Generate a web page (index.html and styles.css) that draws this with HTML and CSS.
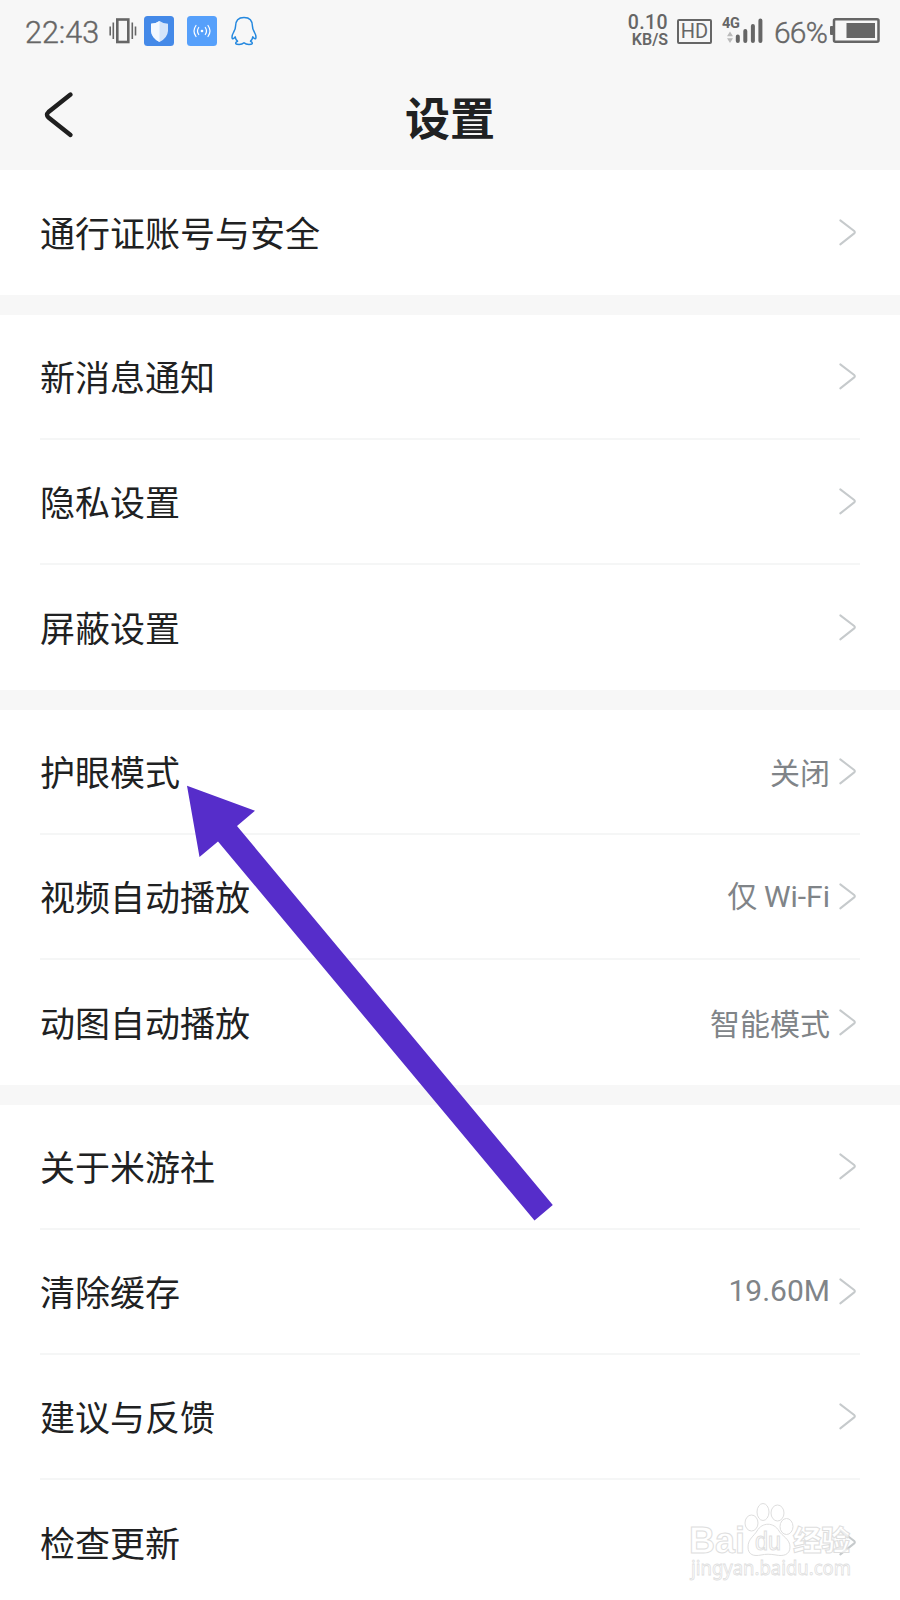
FILE: index.html
```html
<!DOCTYPE html>
<html lang="zh-CN">
<head>
<meta charset="utf-8">
<title>设置</title>
<link rel="stylesheet" href="styles.css">
</head>
<body>
<svg class="defs" width="0" height="0">
  <symbol id="chev" viewBox="0 0 20 30"><path d="M2.300 3.400 L16.200 14 Q17.500 15.200 16.200 16.400 L2.300 27.400" fill="none" stroke="#c6cacc" stroke-width="2" stroke-linecap="round"/></symbol>
</svg>
<div class="screen">
  <header class="top">
    <div class="status">
      <div class="left">
        <span class="time">22:43</span>
        <svg class="vibrate" width="28" height="26" viewBox="0 0 28 26" fill="none" stroke="#666"><rect x="8.300" y="1.500" width="11" height="22.500" stroke-width="2.600"/><path d="M4.300 4.500V21M23.300 4.500V21M1.200 8.500V17.500M26.500 8.500V17.500" stroke-width="1.600"/></svg>
        <svg class="shield" width="30" height="30" viewBox="0 0 30 30"><rect width="30" height="30" rx="3.500" fill="#4489e8"/><path d="M15.500 5 Q19 7.500 24 7.700 V15 Q23.500 22 15.500 26 Q7.500 22 7 15 V7.700 Q12 7.500 15.500 5Z" fill="#d4e4fa"/><path d="M15.500 5 Q12 7.500 7 7.700 V15 Q7.500 22 15.500 26Z" fill="#f4f8ff"/></svg>
        <svg class="cast" width="30" height="30" viewBox="0 0 30 30" fill="none" stroke="#fff" stroke-width="1.200" stroke-linecap="round"><rect width="30" height="30" rx="3.500" fill="#56a0fb" stroke="none"/><circle cx="15" cy="15" r="1.300" fill="#fff" stroke="none"/><path d="M11.700 11.500Q9.300 15 11.700 18.500M18.300 11.500Q20.700 15 18.300 18.500M9 9.500Q5 15 9 20.500M21 9.500Q25 15 21 20.500"/></svg>
        <svg class="penguin" width="26" height="30" viewBox="0 0 26 30" fill="none" stroke="#2488df" stroke-width="1.500" stroke-linejoin="round"><path d="M13 1.500C7 1.500 4.500 5.500 4.500 10.500C4.500 12.500 4 14 2.700 16C1 19 .7 21 1.300 22.500C2 23.500 3.500 22 4.200 20.800C4.500 22.500 5 24 6.500 25.200C4.500 26 4 28 6 28.300C9 28.700 11.500 28.200 13 26.800C14.500 28.200 17 28.700 20 28.300C22 28 21.500 26 19.500 25.200C21 24 21.500 22.500 21.800 20.800C22.500 22 24 23.500 24.700 22.500C25.300 21 25 19 23.300 16C22 14 21.500 12.500 21.500 10.500C21.500 5.500 19 1.500 13 1.500Z"/></svg>
      </div>
      <div class="right">
        <div class="speed"><span class="rate">0.10</span><span>KB/S</span></div>
        <span class="hd">HD</span>
        <div class="net">
          <span class="gen">4G</span>
          <svg width="41" height="26" viewBox="0 0 41 26"><path d="M8 13.500l3 4.700H5zM8 25l3-4.700H5z" fill="#bbb"/><path d="M15.800 18.500V23M23.300 13V23M30.900 8V23M38.400 2.500V23" stroke="#666" stroke-width="4" stroke-linecap="round"/></svg>
        </div>
        <span class="pct">66%</span>
        <svg class="battery" width="50" height="26" viewBox="0 0 50 26"><rect x="4" y="1.300" width="44.500" height="22.500" rx="1.500" fill="none" stroke="#666" stroke-width="2.500"/><rect y="8" width="3.500" height="9" rx="1" fill="#666"/><rect x="16.500" y="5" width="28.500" height="15" fill="#666"/></svg>
      </div>
    </div>
    <div class="nav">
      <svg class="back" width="32" height="50" viewBox="0 0 32 50"><path d="M26.500 4.500L4.500 22Q1.500 24.800 4.500 27.500L26.500 45" fill="none" stroke="#1f1f1f" stroke-width="4.400" stroke-linecap="round"/></svg>
      <h1>设置</h1>
    </div>
  </header>
  <section class="group">
    <div class="row"><span class="label">通行证账号与安全</span><svg class="chev"><use href="#chev"/></svg></div>
  </section>
  <section class="group">
    <div class="row"><span class="label">新消息通知</span><svg class="chev"><use href="#chev"/></svg></div>
    <div class="row"><span class="label">隐私设置</span><svg class="chev"><use href="#chev"/></svg></div>
    <div class="row"><span class="label">屏蔽设置</span><svg class="chev"><use href="#chev"/></svg></div>
  </section>
  <section class="group">
    <div class="row"><span class="label">护眼模式</span><span class="value">关闭</span><svg class="chev"><use href="#chev"/></svg></div>
    <div class="row"><span class="label">视频自动播放</span><span class="value">仅 <span class="latin">Wi-Fi</span></span><svg class="chev"><use href="#chev"/></svg></div>
    <div class="row"><span class="label">动图自动播放</span><span class="value">智能模式</span><svg class="chev"><use href="#chev"/></svg></div>
  </section>
  <section class="group">
    <div class="row"><span class="label">关于米游社</span><svg class="chev"><use href="#chev"/></svg></div>
    <div class="row"><span class="label">清除缓存</span><span class="value latin">19.60M</span><svg class="chev"><use href="#chev"/></svg></div>
    <div class="row"><span class="label">建议与反馈</span><svg class="chev"><use href="#chev"/></svg></div>
    <div class="row"><span class="label">检查更新</span><svg class="chev"><use href="#chev"/></svg></div>
  </section>
  <svg class="arrow" width="370" height="436" viewBox="186 785 370 436"><path d="M187 785.700L255 810.700L237 826L552.800 1205L534.500 1220.500L218 841.500L199.500 857Z" fill="#562dca"/></svg>
  <svg class="watermark" width="180" height="90" viewBox="0 0 180 90">
    <g fill="#fff" stroke="#dedede" stroke-width="1">
      <text class="wm-brand" x="1" y="53" textLength="56" lengthAdjust="spacingAndGlyphs">Bai</text>
      <ellipse cx="63.500" cy="23" rx="6.500" ry="8"/><ellipse cx="75" cy="12" rx="6" ry="8.500"/><ellipse cx="89.500" cy="13" rx="6.500" ry="8"/><ellipse cx="98.500" cy="26.500" rx="6.500" ry="8"/>
      <path d="M69 31C74 22 86 22 91 31C94 36 102 39 102 47C102 55 95 56.500 88 55C82 54 78 54 73 55C66 56.500 60 55 60 47C60 39 66 36 69 31Z"/>
      <text class="wm-du" x="67" y="49.500" textLength="26" lengthAdjust="spacingAndGlyphs">du</text>
      <text class="wm-cn" x="105" y="51" textLength="57" lengthAdjust="spacingAndGlyphs" fill-opacity=".7">经验</text>
      <text class="wm-url" x="3" y="75" textLength="160" lengthAdjust="spacingAndGlyphs">jingyan.baidu.com</text>
    </g>
  </svg>
</div>
</body>
</html>
```
FILE: styles.css
```css
* { box-sizing: border-box; }
body { margin: 0; background: #f7f7f7; font-family: "Noto Sans CJK SC", sans-serif; color: #202122; }
.defs { position: absolute; }
.screen { position: relative; width: 900px; height: 1600px; overflow: hidden; }
.top { height: 170px; background: #f7f7f7; }
.status { height: 62px; display: flex; justify-content: space-between; align-items: center; padding: 0 20px 0 25px; font-family: Roboto, sans-serif; color: #666; }
.left, .right { display: flex; align-items: center; }
.time { width: 84px; font-size: 30.5px; line-height: 36px; padding-top: 4px; font-weight: 300; -webkit-text-stroke: 0.4px #666; }
.vibrate { margin-right: 7px; }
.shield { margin-right: 13px; }
.cast { margin-right: 14px; }
.speed { display: flex; flex-direction: column; align-items: flex-end; font-size: 16px; line-height: 16px; font-weight: 600; width: 44px; margin: 0 9px 0 0; }
.rate { font-size: 19.5px; line-height: 18px; letter-spacing: 0.4px; font-weight: 500; }
.hd { width: 35px; height: 25px; border: 2.5px solid #666; border-radius: 2px; font-size: 20px; line-height: 21px; text-align: center; margin-right: 10px; }
.net { position: relative; width: 41px; height: 26px; margin-right: 11px; }
.net svg { display: block; }
.gen { position: absolute; left: 0; top: -1px; font-size: 14.5px; line-height: 14px; font-weight: 700; letter-spacing: -0.4px; }
.pct { width: 56px; font-size: 30px; line-height: 36px; padding-top: 4px; letter-spacing: -0.8px; font-weight: 300; -webkit-text-stroke: 0.4px #666; white-space: nowrap; }
.nav { display: grid; grid-template-columns: 100px 1fr 100px; align-items: center; height: 106px; }
.back { margin-left: 44px; }
.nav h1 { margin: 0; padding-top: 3px; text-align: center; font-size: 45px; line-height: 60px; font-weight: 700; }
.group { background: #fff; padding: 0 40px; margin-bottom: 20px; }
.row { height: 125px; display: flex; align-items: center; padding-bottom: 2px; border-bottom: 2px solid #f5f6f6; }
.row:last-child { padding-bottom: 0; border-bottom-color: #fff; }
.label { flex: 1; font-size: 35px; line-height: 50px; }
.value { font-size: 30px; line-height: 44px; color: #808488; margin-right: 8px; }
.latin { font-family: Roboto, sans-serif; }
.chev { width: 20px; height: 30px; margin-right: 2px; }
.arrow { position: absolute; left: 186px; top: 785px; }
.watermark { position: absolute; left: 688px; top: 1500px; }
.wm-brand { font: 700 37px "Liberation Sans", sans-serif; }
.wm-du { font: 400 25px "Liberation Sans", sans-serif; }
.wm-cn { font: 900 28px "Noto Sans CJK SC", sans-serif; }
.wm-url { font: 400 20px "Noto Sans", sans-serif; stroke-width: 0.8px; }
```
